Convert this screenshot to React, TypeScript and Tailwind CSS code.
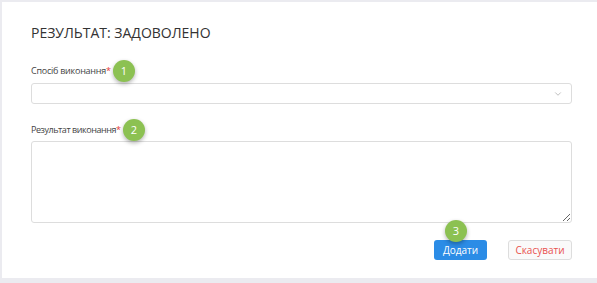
import { ChevronDown } from "lucide-react";

function Badge({ n }: { n: number }) {
  return (
    <span className="-my-[4px] ml-[2px] inline-flex h-[22px] w-[22px] items-center justify-center rounded-full bg-[#8cc152] text-[11px] text-white shadow-[0_2px_4px_rgba(0,0,0,0.3)]">
      {n}
    </span>
  );
}

export default function App() {
  return (
    <div
      className="h-[283px] w-[597px] bg-[#ebebf0] pl-[2px] pt-[2px] pb-[5px]"
      style={{ fontFamily: '"Open Sans", "Noto Sans", sans-serif' }}
    >
      <div className="h-full bg-white pl-[29px] pr-[25px] pt-[21px]">
        <h1 className="text-[14px] leading-5 text-[#333]">РЕЗУЛЬТАТ: ЗАДОВОЛЕНО</h1>

        {/* Спосіб виконання */}
        <div className="mt-[20px] flex h-4 items-center text-[9px] tracking-[-0.25px] text-[#444]">
          <span>
            Спосіб виконання<span className="text-[#e53935]">*</span>
          </span>
          <Badge n={1} />
        </div>
        <div className="mt-[4px] flex h-[21px] items-center justify-end rounded-[3px] border border-[#ddd] pr-2">
          <ChevronDown className="h-[10px] w-[10px] text-[#999]" strokeWidth={1.5} />
        </div>

        {/* Результат виконання */}
        <div className="mt-[18px] flex h-4 items-center text-[9px] tracking-[-0.45px] text-[#444]">
          <span>
            Результат виконання<span className="text-[#e53935]">*</span>
          </span>
          <Badge n={2} />
        </div>
        <textarea className="mt-[3px] block h-[82px] w-full resize-y rounded-[3px] border border-[#ddd] outline-none" />

        <div className="relative mt-[17px] flex justify-end gap-[21px]">
          <span className="absolute left-[414px] top-[-20px] flex h-[22px] w-[22px] items-center justify-center rounded-full bg-[#8cc152] text-[11px] text-white shadow-[0_2px_4px_rgba(0,0,0,0.3)]">
            3
          </span>
          <button className="h-[20px] w-[53px] rounded-[3px] bg-[#2b8ce6] text-[10px] text-white">Додати</button>
          <button className="h-[20px] w-[64px] rounded-[3px] border border-[#ddd] bg-[#fafafa] text-[10px] text-[#e9514f]">
            Скасувати
          </button>
        </div>
      </div>
    </div>
  );
}
